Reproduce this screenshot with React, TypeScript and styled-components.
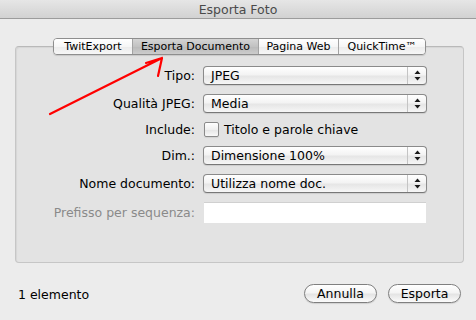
import React from "react";
import styled, { createGlobalStyle } from "styled-components";

const Global = createGlobalStyle`
  html, body { margin: 0; padding: 0; }
  body {
    background: #ececec;
    font-family: "DejaVu Sans", "Liberation Sans", sans-serif;
    font-size: 12px;
    color: #000;
  }
`;

const Window = styled.div`
  position: relative;
  width: 476px;
  height: 320px;
  background: #ececec;
  display: flex;
  flex-direction: column;
  overflow: hidden;
`;

const TitleBar = styled.div`
  height: 18px;
  display: flex;
  align-items: center;
  justify-content: center;
  background: linear-gradient(#e6e6e6, #d2d2d2);
  border-bottom: 1px solid #9c9c9c;
  color: #4a4a4a;
  font-size: 12.5px;
`;

const Section = styled.div`
  margin: 19px 12px 0 15px;
  display: flex;
  flex-direction: column;
`;

const TabRow = styled.div`
  position: relative;
  z-index: 1;
  display: flex;
  justify-content: center;
`;

const Tabs = styled.div`
  display: flex;
  height: 15px;
  border: 1px solid #8e8e8e;
  border-radius: 4px;
  overflow: hidden;
  box-shadow: 0 1px 1px rgba(0, 0, 0, 0.12);
`;

const Tab = styled.div<{ $w: number; $active?: boolean }>`
  width: ${(p) => p.$w}px;
  display: flex;
  align-items: center;
  justify-content: center;
  font-size: 11px;
  background: ${(p) =>
    p.$active
      ? "linear-gradient(#d4d4d4, #c2c2c2 50%, #b9b9b9 51%, #cccccc)"
      : "linear-gradient(#ffffff, #f6f6f6 50%, #ebebeb 51%, #f7f7f7)"};
  border-left: 1px solid #a3a3a3;
  box-sizing: border-box;
  &:first-child { border-left: none; }
`;

const Panel = styled.div`
  margin-top: -9px;
  height: 217px;
  box-sizing: border-box;
  border: 1px solid #c6c6c6;
  border-top-color: #b9b9b9;
  border-radius: 4px;
  background: #e3e3e3;
  box-shadow: inset 1px 1px 1px rgba(0, 0, 0, 0.06);
  padding-top: 19px;
`;

const Form = styled.div`
  display: grid;
  grid-template-columns: 179px 224px;
  grid-template-rows: 19px 19px 15px 19px 19px 21px;
  column-gap: 8px;
  row-gap: 9px;
`;

const Label = styled.div<{ $disabled?: boolean }>`
  display: flex;
  align-items: center;
  justify-content: flex-end;
  white-space: nowrap;
  font-size: 12.5px;
  color: ${(p) => (p.$disabled ? "#8a8a8a" : "#000")};
`;

const Popup = styled.div`
  display: flex;
  align-items: stretch;
  box-sizing: border-box;
  height: 19px;
  border: 1px solid #8a8a8a;
  border-bottom-color: #777;
  border-radius: 4px;
  background: linear-gradient(#ffffff, #f3f3f3 45%, #e6e6e6 55%, #f6f6f6);
  box-shadow: 0 1px 1px rgba(0, 0, 0, 0.1);
`;

const PopupText = styled.div`
  flex: 1;
  display: flex;
  align-items: center;
  padding-left: 7px;
  font-size: 12.5px;
`;

const PopupArrows = styled.div`
  width: 18px;
  border-left: 1px solid #c4c4c4;
  display: flex;
  align-items: center;
  justify-content: center;
`;

const CheckRow = styled.div`
  display: flex;
  align-items: center;
  gap: 5px;
  font-size: 12.5px;
`;

const CheckBox = styled.div`
  width: 13px;
  height: 13px;
  margin-left: 1px;
  border: 1px solid #8a8a8a;
  border-radius: 2px;
  background: linear-gradient(#ffffff, #f0f0f0 50%, #e4e4e4 51%, #f8f8f8);
  box-shadow: 0 1px 1px rgba(0, 0, 0, 0.08);
`;

const TextField = styled.div`
  margin-left: 1px;
  width: 222px;
  height: 21px;
  box-sizing: border-box;
  background: #fff;
  border-top: 1px solid #d0d0d0;
`;

const Footer = styled.div`
  margin-top: 21px;
  padding: 0 15px 0 18px;
  display: flex;
  align-items: center;
  height: 19px;
`;

const Status = styled.div`
  flex: 1;
  font-size: 12.5px;
  padding-top: 2px;
`;

const Buttons = styled.div`
  display: flex;
  gap: 11px;
`;

const Button = styled.div`
  width: 73px;
  height: 19px;
  box-sizing: border-box;
  display: flex;
  align-items: center;
  justify-content: center;
  border: 1px solid #7f7f7f;
  border-radius: 10px;
  background: linear-gradient(#ffffff, #f4f4f4 45%, #e4e4e4 55%, #fbfbfb);
  box-shadow: 0 1px 1px rgba(0, 0, 0, 0.12);
  font-size: 12.5px;
`;

const Annotation = styled.svg`
  position: absolute;
  left: 0;
  top: 0;
  pointer-events: none;
`;

const Arrows = () => (
  <svg width="7" height="11" viewBox="0 0 7 11">
    <path d="M3.5 0.5 L6.5 4 L0.5 4 Z" fill="#1a1a1a" />
    <path d="M3.5 10.5 L6.5 7 L0.5 7 Z" fill="#1a1a1a" />
  </svg>
);

const PopupField = ({ value }: { value: string }) => (
  <Popup>
    <PopupText>{value}</PopupText>
    <PopupArrows>
      <Arrows />
    </PopupArrows>
  </Popup>
);

const tabs = [
  { label: "TwitExport", w: 78 },
  { label: "Esporta Documento", w: 126, active: true },
  { label: "Pagina Web", w: 80 },
  { label: "QuickTime™", w: 87 },
];

export default function App() {
  return (
    <Window>
      <Global />
      <TitleBar>Esporta Foto</TitleBar>
      <Section>
        <TabRow>
          <Tabs>
            {tabs.map((t) => (
              <Tab key={t.label} $w={t.w} $active={t.active}>
                {t.label}
              </Tab>
            ))}
          </Tabs>
        </TabRow>
        <Panel>
          <Form>
            <Label>Tipo:</Label>
            <PopupField value="JPEG" />
            <Label>Qualità JPEG:</Label>
            <PopupField value="Media" />
            <Label>Include:</Label>
            <CheckRow>
              <CheckBox />
              <span>Titolo e parole chiave</span>
            </CheckRow>
            <Label>Dim.:</Label>
            <PopupField value="Dimensione 100%" />
            <Label>Nome documento:</Label>
            <PopupField value="Utilizza nome doc." />
            <Label $disabled>Prefisso per sequenza:</Label>
            <TextField />
          </Form>
        </Panel>
      </Section>
      <Footer>
        <Status>1 elemento</Status>
        <Buttons>
          <Button>Annulla</Button>
          <Button>Esporta</Button>
        </Buttons>
      </Footer>
      <Annotation width="476" height="320" viewBox="0 0 476 320">
        <path
          d="M50 114 L162 58 M146 63 L162 58 L158 76"
          stroke="#ff0000"
          strokeWidth="2.2"
          fill="none"
          strokeLinecap="round"
          strokeLinejoin="round"
        />
      </Annotation>
    </Window>
  );
}
